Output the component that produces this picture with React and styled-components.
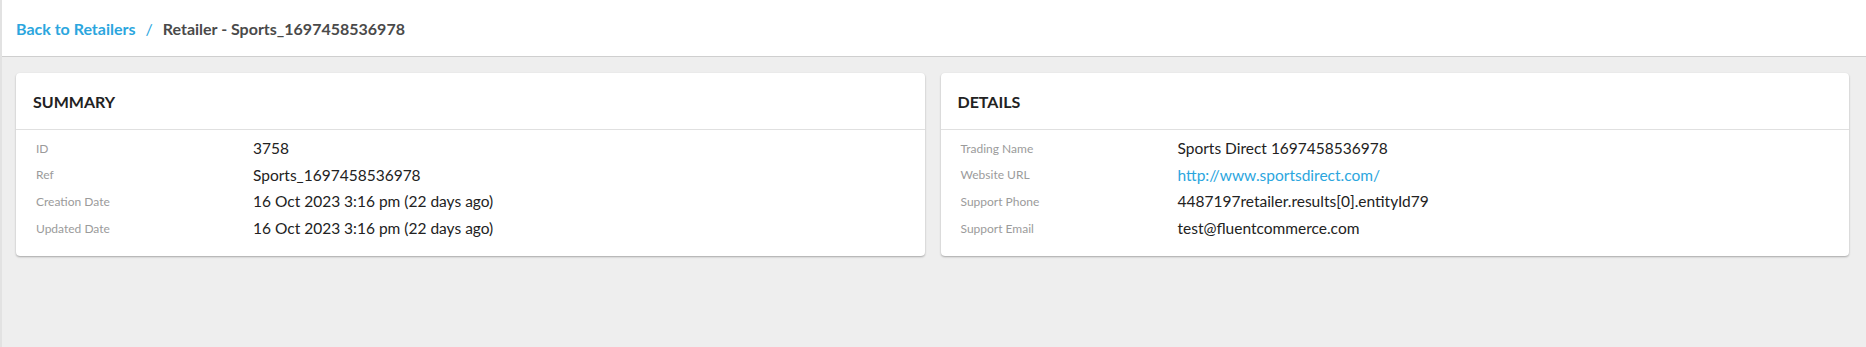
import React from 'react';
import styled, { createGlobalStyle } from 'styled-components';

const GlobalStyle = createGlobalStyle`
  html, body {
    margin: 0;
    padding: 0;
    background: #eeeeee;
    font-family: Lato, "Open Sans", sans-serif;
  }
`;

const summary = [
  { label: 'ID', value: '3758' },
  { label: 'Ref', value: 'Sports_1697458536978' },
  { label: 'Creation Date', value: '16 Oct 2023 3:16 pm (22 days ago)' },
  { label: 'Updated Date', value: '16 Oct 2023 3:16 pm (22 days ago)' },
];

const details = [
  { label: 'Trading Name', value: 'Sports Direct 1697458536978' },
  { label: 'Website URL', value: 'http://www.sportsdirect.com/', link: true },
  { label: 'Support Phone', value: '4487197retailer.results[0].entityId79' },
  { label: 'Support Email', value: 'test@fluentcommerce.com' },
];

const Page = styled.div`
  min-height: 347px;
  background: #eeeeee;
  border-left: 2px solid #e2e2e2;
  box-sizing: border-box;
`;

const TopBar = styled.div`
  height: 56px;
  background: #ffffff;
  border-bottom: 1px solid #cfcfcf;
  display: flex;
  align-items: center;
  padding: 0 14px;
  font-size: 16px;
  font-weight: 700;
`;

const Crumb = styled.a`
  color: #2ba6de;
  text-decoration: none;
`;

const Slash = styled.span`
  color: #2ba6de;
  margin: 0 10px;
  font-weight: 400;
`;

const Current = styled.span`
  color: #4a4a4a;
`;

const CardRow = styled.div`
  display: grid;
  grid-template-columns: 1fr 1fr;
  gap: 16px;
  padding: 16px 17px 0 14px;
`;

const Card = styled.section`
  background: #ffffff;
  border-radius: 4px;
  box-shadow: 0 1px 2px rgba(0, 0, 0, 0.3);
`;

const CardHeader = styled.div`
  height: 56px;
  display: flex;
  align-items: center;
  padding: 0 17px;
  border-bottom: 1px solid #e0e0e0;
  font-size: 16px;
  font-weight: 700;
  color: #222222;
`;

const Rows = styled.div`
  display: grid;
  grid-template-columns: 217px 1fr;
  grid-auto-rows: 26.6px;
  align-items: center;
  padding: 5px 20px 15px;
`;

const Label = styled.div`
  font-size: 12px;
  color: #9b9b9b;
`;

const Value = styled.div`
  font-size: 15.5px;
  color: ${p => (p.$link ? '#2ba6de' : '#222222')};
`;

const InfoCard = ({ title, items }) => (
  <Card>
    <CardHeader>{title}</CardHeader>
    <Rows>
      {items.map(item => (
        <React.Fragment key={item.label}>
          <Label>{item.label}</Label>
          <Value $link={item.link}>{item.value}</Value>
        </React.Fragment>
      ))}
    </Rows>
  </Card>
);

export default function App() {
  return (
    <Page>
      <GlobalStyle />
      <TopBar>
        <Crumb href="#">Back to Retailers</Crumb>
        <Slash>/</Slash>
        <Current>Retailer - Sports_1697458536978</Current>
      </TopBar>
      <CardRow>
        <InfoCard title="SUMMARY" items={summary} />
        <InfoCard title="DETAILS" items={details} />
      </CardRow>
    </Page>
  );
}
